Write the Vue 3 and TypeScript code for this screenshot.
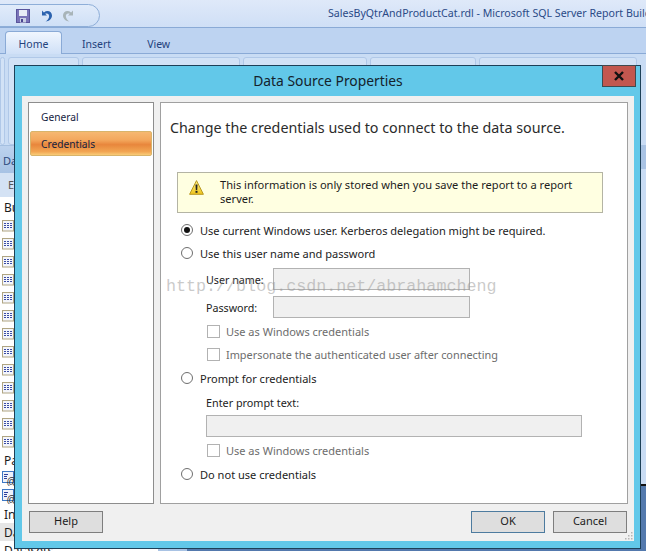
<script setup lang="ts">
const topIcons = Array.from({ length: 13 }, (_, i) => i)
</script>

<template>
  <div class="page">
    <header class="titlebar">
      <div class="qat">
        <svg class="qicon" width="14" height="14" viewBox="0 0 14 14">
          <rect x="0.5" y="0.5" width="13" height="13" fill="#7a74b8" stroke="#5a559c" />
          <rect x="3" y="1" width="8" height="6" fill="#e8ecf6" />
          <rect x="4" y="9" width="6" height="4.5" fill="#c9cfe4" />
          <rect x="5" y="10" width="2" height="3" fill="#4a4590" />
        </svg>
        <svg class="qicon" width="14" height="14" viewBox="0 0 14 14">
          <path d="M3 1.5 L3 6.5 L8 6.5 L6.2 4.8 C8.5 3.6 10.8 5.4 10 8.2 C9.5 10 8.2 11.5 6.5 12.5 C10 12.5 13 10 13 6.6 C13 2.6 8.6 0.6 4.9 3.4 Z" fill="#2b62ae" />
        </svg>
        <svg class="qicon" width="14" height="14" viewBox="0 0 14 14">
          <path d="M11 1.5 L11 6.5 L6 6.5 L7.8 4.8 C5.5 3.6 3.2 5.4 4 8.2 C4.5 10 5.8 11.5 7.5 12.5 C4 12.5 1 10 1 6.6 C1 2.6 5.4 0.6 9.1 3.4 Z" fill="#a8b4b8" />
        </svg>
      </div>
      <span class="doc">SalesByQtrAndProductCat.rdl - Microsoft SQL Server Report Builder</span>
    </header>
    <nav class="tabs">
      <span class="tab active">Home</span>
      <span class="tab insert">Insert</span>
      <span class="tab view">View</span>
    </nav>
    <div class="ribbon">
      <div class="group g1"></div>
      <div class="group g2"></div>
      <div class="group g3"></div>
      <div class="group g4"></div>
      <div class="group g5"></div>
      <div class="group g6"></div>
    </div>
    <aside class="pane">
      <div class="pane-head">Da</div>
      <div class="pane-tool">E</div>
      <div class="pane-list">
        <div class="row label tall">Bu</div>
        <div v-for="i in topIcons" :key="i" class="row">
          <svg width="13" height="12" viewBox="0 0 13 12">
            <rect x="1.5" y="0.5" width="11" height="10.5" fill="#f3f5fb" stroke="#b0a582" />
            <path d="M3 3.5h8M3 5.5h8M3 7.5h8" stroke="#3a4ca4" stroke-dasharray="2 1" />
          </svg>
        </div>
        <div class="row label">Pa</div>
        <div class="row">
          <svg width="14" height="15" viewBox="0 0 14 15">
            <rect x="1.5" y="0.5" width="11" height="11" fill="#eef2fa" stroke="#3f78c4" />
            <path d="M3 3.5h4M3 5.5h3M3 7.5h3" stroke="#2c3f9c" />
            <text x="5.5" y="13.5" font-size="10" font-family="Liberation Sans, sans-serif" fill="#333">@</text>
          </svg>
        </div>
        <div class="row">
          <svg width="14" height="15" viewBox="0 0 14 15">
            <rect x="1.5" y="0.5" width="11" height="11" fill="#eef2fa" stroke="#3f78c4" />
            <path d="M3 3.5h4M3 5.5h3M3 7.5h3" stroke="#2c3f9c" />
            <text x="5.5" y="13.5" font-size="10" font-family="Liberation Sans, sans-serif" fill="#333">@</text>
          </svg>
        </div>
        <div class="row label">In</div>
        <div class="row label shaded">Da</div>
        <div class="row label">Datasets</div>
      </div>
    </aside>
    <div class="right-strip"></div>
    <div class="right-dark"></div>
    <div class="bottom-strip"></div>

    <section class="dialog">
      <div class="dlg-title">
        <span>Data Source Properties</span>
        <button class="close">
          <svg width="12" height="10" viewBox="0 0 12 10">
            <path d="M2 1 L10 9 M10 1 L2 9" stroke="#111" stroke-width="2.4" />
          </svg>
        </button>
      </div>
      <div class="dlg-body">
        <div class="panels">
          <div class="side">
            <div class="side-item">General</div>
            <div class="side-item selected">Credentials</div>
          </div>
          <div class="main">
            <h1>Change the credentials used to connect to the data source.</h1>
            <div class="warn">
              <svg width="15" height="15" viewBox="0 0 15 15">
                <defs>
                  <linearGradient id="wg" x1="0" y1="0" x2="0" y2="1">
                    <stop offset="0" stop-color="#fff38a" />
                    <stop offset="1" stop-color="#eec31c" />
                  </linearGradient>
                </defs>
                <path d="M7.5 0.6 L14.4 14.3 L0.6 14.3 Z" fill="url(#wg)" stroke="#b8971e" stroke-linejoin="round" />
                <path d="M6.5 4.5 h2 l-0.3 5.4 h-1.4 Z" fill="#222" />
                <rect x="6.5" y="10.8" width="2" height="2" fill="#222" />
              </svg>
              <p>This information is only stored when you save the report to a report server.</p>
            </div>
            <div class="opt first"><i class="radio on"></i><span>Use current Windows user. Kerberos delegation might be required.</span></div>
            <div class="opt second"><i class="radio"></i><span>Use this user name and password</span></div>
            <div class="cred">
              <div class="field"><label>User name:</label><div class="input"></div></div>
              <div class="field"><label>Password:</label><div class="input"></div></div>
              <div class="check c1"><i class="box"></i><span>Use as Windows credentials</span></div>
              <div class="check c2"><i class="box"></i><span>Impersonate the authenticated user after connecting</span></div>
            </div>
            <div class="opt third"><i class="radio"></i><span>Prompt for credentials</span></div>
            <div class="prompt">
              <label>Enter prompt text:</label>
              <div class="input wide"></div>
              <div class="check c3"><i class="box"></i><span>Use as Windows credentials</span></div>
            </div>
            <div class="opt fourth"><i class="radio"></i><span>Do not use credentials</span></div>
          </div>
        </div>
        <div class="buttons">
          <button class="btn">Help</button>
          <span class="spacer"></span>
          <button class="btn ok">OK</button>
          <button class="btn">Cancel</button>
        </div>
        <svg class="grip" width="8" height="8" viewBox="0 0 8 8">
          <path d="M6 0h1.5v1.5H6zM6 3h1.5v1.5H6zM3 3h1.5v1.5H3zM6 6h1.5v1.5H6zM3 6h1.5v1.5H3zM0 6h1.5v1.5H0z" fill="#b5b5b5" />
        </svg>
      </div>
    </section>
    <div class="watermark">http://blog.csdn.net/abrahamcheng</div>
  </div>
</template>

<style>
html, body { margin: 0; overflow: hidden; }
</style>

<style scoped>
.page {
  position: relative;
  width: 646px;
  height: 551px;
  overflow: hidden;
  background: #c9dcf4;
  font-family: "Noto Sans", "Open Sans", sans-serif;
  font-size: 11px;
  color: #1b1b1b;
}
.titlebar {
  height: 28px;
  box-sizing: border-box;
  border-bottom: 1px solid #8aaad6;
  background: linear-gradient(#dfe9f9, #cfdff6);
  display: flex;
  position: relative;
}
.qat {
  position: absolute;
  left: -12px;
  top: 4px;
  width: 112px;
  height: 23px;
  box-sizing: border-box;
  border: 1px solid #8eaed8;
  border-radius: 0 12px 12px 0;
  background: linear-gradient(#e1ebfa, #cfe0f6);
  display: flex;
  align-items: center;
  padding-left: 27px;
  gap: 9px;
}
.qicon { flex: none; }
.doc {
  position: absolute;
  left: 328px;
  top: 6px;
  white-space: nowrap;
  font-size: 10.6px;
  color: #2a4a86;
}
.tabs {
  height: 26px;
  box-sizing: border-box;
  background: #bdd3f1;
  border-bottom: 1px solid #8aaad6;
  display: flex;
  align-items: flex-end;
  padding-left: 5px;
}
.tab {
  color: #24427c;
  font-size: 10.5px;
  line-height: 20px;
}
.tab.active {
  width: 57px;
  height: 23px;
  box-sizing: border-box;
  margin-bottom: -1px;
  border: 1px solid #8aaad6;
  border-bottom: 0;
  border-radius: 4px 4px 0 0;
  background: linear-gradient(#f0f6fe, #cfe0f7);
  text-align: center;
  line-height: 25px;
}
.tab.insert { margin-left: 20px; margin-bottom: -1px; }
.tab.view { margin-left: 36px; margin-bottom: -1px; }
.ribbon {
  height: 92px;
  box-sizing: border-box;
  display: flex;
  gap: 3px;
  padding: 3px 0 0 0;
  background: #c9dcf4;
  border-bottom: 1px solid #a4bfe0;
}
.group {
  box-sizing: border-box;
  border: 1px solid #b0c8e8;
  border-radius: 3px;
  background: #d2e2f6;
}
.g1 { width: 5px; }
.g2 { width: 71px; }
.g3 { width: 158px; }
.g4 { width: 124px; }
.g5 { width: 106px; }
.g6 { width: 158px; }
.pane {
  position: absolute;
  left: 0;
  top: 146px;
  width: 160px;
  bottom: 0;
  background: #fff;
  color: #1c1c1c;
}
.pane-head {
  height: 27px;
  box-sizing: border-box;
  background: linear-gradient(#bcd2ee, #a7c2e4);
  padding: 7px 0 0 3px;
  color: #2c4a7e;
}
.pane-tool {
  height: 24px;
  box-sizing: border-box;
  background: #d4e2f4;
  padding: 4px 0 0 8px;
  color: #555;
}
.pane-list { padding-top: 1px; }
.row {
  height: 18px;
  display: flex;
  align-items: center;
  padding-left: 1px;
  box-sizing: border-box;
  white-space: nowrap;
}
.row.label { padding-left: 4px; font-size: 12px; }
.row.tall { height: 19px; }
.row.shaded { background: #e6e6e6; }
.right-strip {
  position: absolute;
  right: 0;
  top: 145px;
  width: 8px;
  height: 24px;
  background: #a9c3e4;
}
.right-dark {
  position: absolute;
  right: 0;
  top: 484px;
  width: 6px;
  height: 67px;
  border-top: 2px solid #111;
  box-sizing: border-box;
  background: #5379ad;
}
.bottom-strip {
  position: absolute;
  left: 158px;
  right: 0;
  bottom: 0;
  height: 4px;
  background: linear-gradient(90deg, #a9c3e4 0, #a9c3e4 29px, #5379ad 29px);
}
.dialog {
  position: absolute;
  left: 14px;
  top: 65px;
  width: 627px;
  height: 484px;
  box-sizing: border-box;
  border: 1px solid #1d4058;
  background: #62c8e9;
  display: flex;
  flex-direction: column;
  padding: 0 6px 7px 7px;
}
.dlg-title {
  height: 30px;
  flex: none;
  position: relative;
  display: flex;
  justify-content: center;
  align-items: center;
  font-size: 13.85px;
  color: #14222c;
  padding-bottom: 1px;
  box-sizing: border-box;
}
.close {
  position: absolute;
  right: -2px;
  top: -1px;
  width: 34px;
  height: 22px;
  padding: 0;
  border: 1px solid #3f4a50;
  background: #c2574f;
  display: flex;
  align-items: center;
  justify-content: center;
}
.dlg-body {
  flex: 1;
  position: relative;
  background: #f0f0f0;
  display: flex;
  flex-direction: column;
  padding: 6px 6px 0;
}
.panels {
  height: 402px;
  display: flex;
  gap: 6px;
}
.side {
  width: 126px;
  box-sizing: border-box;
  border: 1px solid #8d8d8d;
  background: #fff;
  padding-top: 5px;
}
.side-item {
  height: 23px;
  line-height: 18px;
  padding-left: 12px;
  font-size: 10.2px;
  color: #15233f;
}
.side-item.selected {
  margin: 0 1px;
  padding-left: 10px;
  height: 25px;
  line-height: 25px;
  box-sizing: border-box;
  border: 1px solid #d9b46a;
  border-radius: 2px;
  background: linear-gradient(#f6b871 0%, #f3a75c 35%, #e8863c 55%, #f2a552 85%, #f9cc78 100%);
}
.main {
  width: 468px;
  box-sizing: border-box;
  border: 1px solid #a0a0a0;
  background: #fff;
  padding-left: 9px;
  color: #222;
}
h1 {
  margin: 15px 0 0;
  font-weight: 400;
  font-size: 14.3px;
  line-height: 20px;
  color: #2b2b2b;
  white-space: nowrap;
}
.warn {
  margin: 34px 0 0 7px;
  width: 426px;
  height: 41px;
  box-sizing: border-box;
  border: 1px solid #b4b4a4;
  background: #ffffe1;
  display: flex;
  padding: 5px 8px 0 11px;
  gap: 16px;
}
.warn svg { flex: none; margin-top: 2px; }
.warn p {
  margin: 0;
  font-size: 11.1px;
  line-height: 14px;
  color: #1c1c1c;
}
.opt {
  display: flex;
  align-items: center;
  gap: 7px;
  height: 16px;
  margin-left: 11px;
  font-size: 11.05px;
  white-space: nowrap;
}
.first { margin-top: 9px; }
.second { margin-top: 7px; }
.third { margin-top: 9px; }
.fourth { margin-top: 9px; }
.radio {
  width: 12px;
  height: 12px;
  flex: none;
  box-sizing: border-box;
  border: 1px solid #6e6e6e;
  border-radius: 50%;
  background: #fff;
  position: relative;
}
.radio.on::after {
  content: "";
  position: absolute;
  inset: 2px;
  border-radius: 50%;
  background: #111;
}
.cred { margin: 7px 0 0 36px; }
.field {
  height: 22px;
  display: flex;
  align-items: center;
  margin-bottom: 6px;
}
.field label { width: 67px; font-size: 10.7px; padding-top: 2px; }
.input {
  width: 197px;
  height: 22px;
  box-sizing: border-box;
  border: 1px solid #b2b2b2;
  background: #f0f0f0;
}
.check {
  display: flex;
  align-items: center;
  gap: 6px;
  height: 14px;
  margin-left: 1px;
  color: #6d6d6d;
  font-size: 11px;
  white-space: nowrap;
}
.check.c2 { font-size: 10.9px; }
.c1 { margin-top: 6px; }
.c2 { margin-top: 9px; }
.c3 { margin-top: 6px; }
.box {
  width: 13px;
  height: 13px;
  flex: none;
  box-sizing: border-box;
  border: 1px solid #b2b2b2;
  background: #fff;
}
.prompt { margin: 9px 0 0 36px; }
.prompt label { display: block; height: 16px; line-height: 16px; font-size: 10.8px; }
.input.wide { width: 376px; margin-top: 4px; }
.buttons {
  display: flex;
  gap: 8px;
  margin-top: 7px;
  padding: 0 1px;
}
.spacer { flex: 1; }
.btn {
  width: 74px;
  height: 22px;
  padding: 0 0 3px;
  box-sizing: border-box;
  border: 1px solid #7e7e7e;
  background: #dedede;
  font: inherit;
  color: #1c1c1c;
}
.btn.ok { border-color: #4d7b9f; }
.grip { position: absolute; right: 1px; bottom: 1px; }
.watermark {
  position: absolute;
  left: 166px;
  top: 277px;
  font-family: "Liberation Mono", monospace;
  font-size: 16.7px;
  line-height: 20px;
  color: rgba(150, 150, 150, 0.5);
  white-space: nowrap;
  pointer-events: none;
}
</style>
